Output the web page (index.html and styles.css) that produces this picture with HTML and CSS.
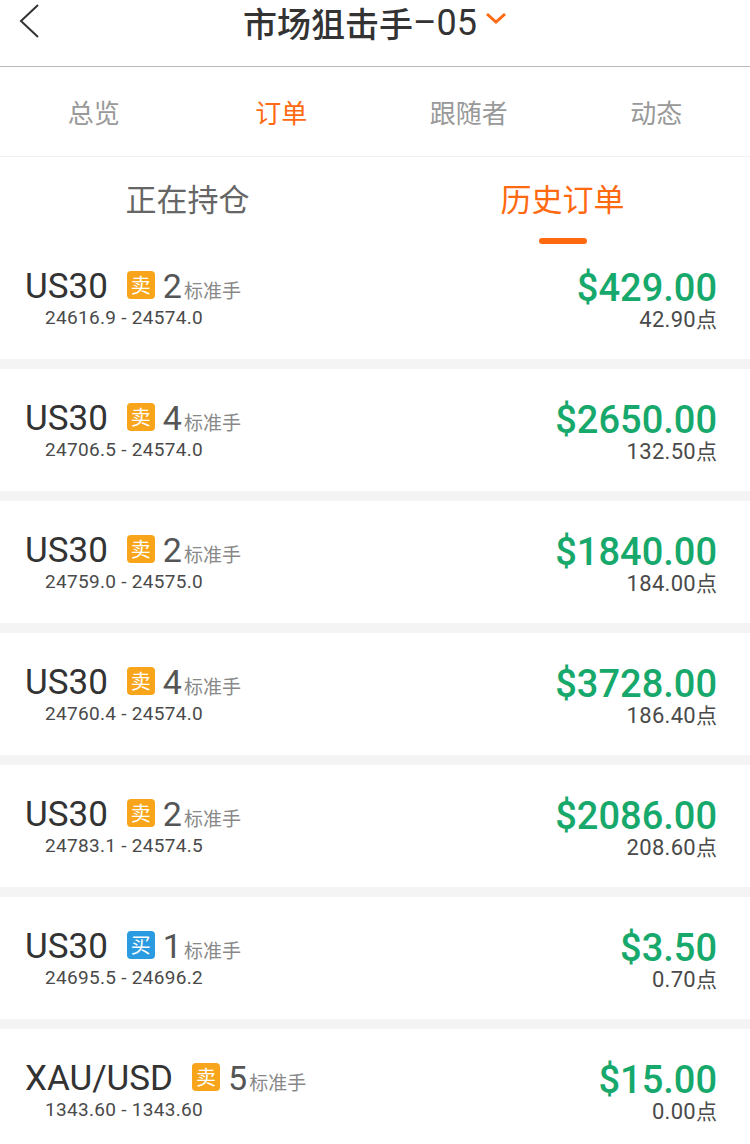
FILE: index.html
```html
<!DOCTYPE html>
<html lang="zh-CN">
<head>
    <meta charset="UTF-8">
    <meta name="viewport" content="width=device-width, initial-scale=1.0">
    <title>市场狙击手-05</title>
    <link rel="stylesheet" href="styles.css">
</head>
<body>
    <header class="top-bar">
        <span class="back">
            <svg width="22" height="34" viewBox="0 0 22 34"><polyline points="20,1 3,17 20,33" fill="none" stroke="#333" stroke-width="2"/></svg>
        </span>
        <h1 class="title">市场狙击手<span class="num">–05</span>
            <svg class="caret" width="22" height="12" viewBox="0 0 22 12"><polyline points="2,2 11,10 20,2" fill="none" stroke="#ff6a10" stroke-width="3"/></svg>
        </h1>
    </header>

    <nav class="tabs">
        <span>总览</span>
        <span class="active">订单</span>
        <span>跟随者</span>
        <span>动态</span>
    </nav>

    <div class="sub-tabs">
        <span>正在持仓</span>
        <span class="active">历史订单</span>
    </div>

    <div class="orders">
        <div class="order">
            <div class="left">
                <div class="line">
                    <span class="symbol">US30</span>
                    <span class="badge sell">卖</span>
                    <span class="lots">2</span><span class="unit">标准手</span>
                </div>
                <div class="range">24616.9 - 24574.0</div>
            </div>
            <div class="right">
                <div class="profit">$429.00</div>
                <div class="points">42.90<span class="cjk">点</span></div>
            </div>
        </div>
        <div class="order">
            <div class="left">
                <div class="line">
                    <span class="symbol">US30</span>
                    <span class="badge sell">卖</span>
                    <span class="lots">4</span><span class="unit">标准手</span>
                </div>
                <div class="range">24706.5 - 24574.0</div>
            </div>
            <div class="right">
                <div class="profit">$2650.00</div>
                <div class="points">132.50<span class="cjk">点</span></div>
            </div>
        </div>
        <div class="order">
            <div class="left">
                <div class="line">
                    <span class="symbol">US30</span>
                    <span class="badge sell">卖</span>
                    <span class="lots">2</span><span class="unit">标准手</span>
                </div>
                <div class="range">24759.0 - 24575.0</div>
            </div>
            <div class="right">
                <div class="profit">$1840.00</div>
                <div class="points">184.00<span class="cjk">点</span></div>
            </div>
        </div>
        <div class="order">
            <div class="left">
                <div class="line">
                    <span class="symbol">US30</span>
                    <span class="badge sell">卖</span>
                    <span class="lots">4</span><span class="unit">标准手</span>
                </div>
                <div class="range">24760.4 - 24574.0</div>
            </div>
            <div class="right">
                <div class="profit">$3728.00</div>
                <div class="points">186.40<span class="cjk">点</span></div>
            </div>
        </div>
        <div class="order">
            <div class="left">
                <div class="line">
                    <span class="symbol">US30</span>
                    <span class="badge sell">卖</span>
                    <span class="lots">2</span><span class="unit">标准手</span>
                </div>
                <div class="range">24783.1 - 24574.5</div>
            </div>
            <div class="right">
                <div class="profit">$2086.00</div>
                <div class="points">208.60<span class="cjk">点</span></div>
            </div>
        </div>
        <div class="order">
            <div class="left">
                <div class="line">
                    <span class="symbol">US30</span>
                    <span class="badge buy">买</span>
                    <span class="lots">1</span><span class="unit">标准手</span>
                </div>
                <div class="range">24695.5 - 24696.2</div>
            </div>
            <div class="right">
                <div class="profit">$3.50</div>
                <div class="points">0.70<span class="cjk">点</span></div>
            </div>
        </div>
        <div class="order">
            <div class="left">
                <div class="line">
                    <span class="symbol">XAU/USD</span>
                    <span class="badge sell">卖</span>
                    <span class="lots">5</span><span class="unit">标准手</span>
                </div>
                <div class="range">1343.60 - 1343.60</div>
            </div>
            <div class="right">
                <div class="profit">$15.00</div>
                <div class="points">0.00<span class="cjk">点</span></div>
            </div>
        </div>
    </div>
</body>
</html>
```

FILE: styles.css
```css
body {
    margin: 0;
    font-family: Roboto, "Noto Sans CJK SC", sans-serif;
    background: #f4f4f4;
    color: #333;
}
.top-bar {
    height: 67px;
    box-sizing: border-box;
    padding-bottom: 22px;
    background: #fff;
    border-bottom: 1px solid #bbb;
    display: flex;
    align-items: center;
    justify-content: center;
    position: relative;
}
.back {
    position: absolute;
    left: 18px;
    top: 4px;
    line-height: 0;
}
.title {
    margin: 0;
    font-family: "Noto Sans CJK SC", sans-serif;
    font-size: 34px;
    font-weight: 500;
    color: #333;
    display: flex;
    align-items: center;
    line-height: 44px;
    margin-top: 2px;
}
.title .num {
    font-family: Roboto, sans-serif;
    font-weight: 400;
    font-size: 36px;
}
.title .caret {
    margin-left: 8px;
    margin-top: -10px;
}
.tabs {
    display: grid;
    grid-template-columns: repeat(4, 1fr);
    height: 89px;
    align-items: center;
    background: #fff;
    border-bottom: 1px solid #f0f0f0;
    font-family: "Noto Sans CJK SC", sans-serif;
    font-size: 26px;
    color: #999;
    text-align: center;
}
.tabs .active {
    color: #ff6a10;
}
.sub-tabs {
    display: grid;
    grid-template-columns: 1fr 1fr;
    height: 80px;
    align-items: center;
    background: #fff;
    font-family: "Noto Sans CJK SC", sans-serif;
    font-size: 31px;
    color: #666;
    text-align: center;
}
.sub-tabs span {
    position: relative;
}
.sub-tabs .active {
    color: #ff6a10;
}
.sub-tabs .active::after {
    content: "";
    position: absolute;
    left: 50%;
    margin-left: -24px;
    bottom: -24px;
    width: 48px;
    height: 6px;
    border-radius: 3px;
    background: #ff6a10;
}
.orders {
    display: flex;
    flex-direction: column;
    gap: 10px;
}
.order {
    height: 122px;
    box-sizing: border-box;
    padding: 0 33px 0 25px;
    background: #fff;
    display: flex;
    align-items: center;
    justify-content: space-between;
}
.line {
    display: flex;
    align-items: baseline;
    height: 36px;
}
.symbol {
    font-size: 35px;
    line-height: 36px;
    color: #333;
}
.badge {
    align-self: flex-start;
    margin: 3px 8px 0 19px;
    width: 28px;
    height: 28px;
    border-radius: 4px;
    color: #fff;
    font-family: "Noto Sans CJK SC", sans-serif;
    font-size: 20px;
    line-height: 28px;
    text-align: center;
}
.badge.sell {
    background: #f8a51c;
}
.badge.buy {
    background: #2a9be0;
}
.lots {
    font-size: 34px;
    line-height: 36px;
    color: #555;
    margin-right: 2px;
}
.unit {
    font-family: "Noto Sans CJK SC", sans-serif;
    font-size: 19px;
    color: #888;
}
.range {
    padding-left: 20px;
    margin-top: 4px;
    font-size: 19px;
    line-height: 20px;
    letter-spacing: 0.3px;
    color: #4a4a4a;
}
.right {
    text-align: right;
    padding-top: 2px;
}
.profit {
    font-size: 38px;
    line-height: 40px;
    font-weight: 500;
    color: #17a86c;
}
.points {
    font-size: 22px;
    line-height: 22px;
    height: 22px;
    letter-spacing: 0.3px;
    color: #4a4a4a;
}
.points .cjk {
    font-family: "Noto Sans CJK SC", sans-serif;
    font-size: 21px;
    line-height: 1;
    letter-spacing: 0;
}
```
